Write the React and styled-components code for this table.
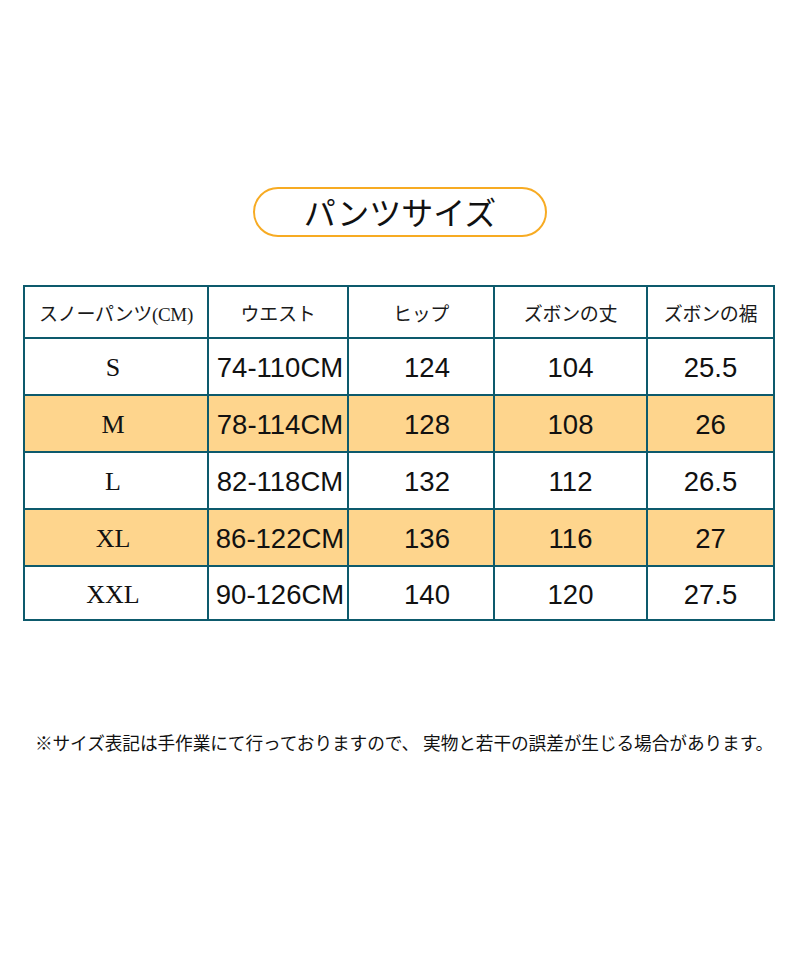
import React from "react";
import styled, { createGlobalStyle } from "styled-components";

const Global = createGlobalStyle`
  html, body { margin: 0; padding: 0; background: #fff; }
  body { width: 800px; height: 960px; overflow: hidden; }
`;

const Page = styled.div`
  width: 800px;
  height: 960px;
  display: flex;
  flex-direction: column;
  align-items: center;
  padding-top: 187px;
  box-sizing: border-box;
`;

const Pill = styled.div`
  width: 294px;
  height: 50px;
  box-sizing: border-box;
  border: 2.5px solid #f7ab23;
  border-radius: 25px;
  display: flex;
  align-items: center;
  justify-content: center;
  font-family: "Noto Sans CJK JP", sans-serif;
  font-size: 32px;
  font-weight: 400;
  color: #111;
  padding-bottom: 2px;
`;

const Table = styled.table`
  margin-top: 48px;
  margin-left: -2px;
  border-collapse: collapse;
  width: 750px;
  table-layout: fixed;
  border: 2px solid #0d5a6c;
`;

const Col = styled.col`
  width: ${(p) => p.$w}px;
`;

const Row = styled.tr`
  height: ${(p) => p.$h}px;
  background: ${(p) => (p.$hl ? "#fed58d" : "#fff")};
`;

const HeadCell = styled.td`
  border: 2px solid #0d5a6c;
  text-align: center;
  vertical-align: middle;
  padding: 0;
  font-family: "Liberation Serif", "Noto Sans CJK JP", serif;
  font-size: 19px;
  color: #1a1a1a;
  white-space: nowrap;
  letter-spacing: -0.3px;
`;

const SizeCell = styled.td`
  border: 2px solid #0d5a6c;
  text-align: center;
  vertical-align: middle;
  padding: 3px 6px 0 0;
  font-family: "Liberation Serif", serif;
  font-size: 26px;
  color: #111;
`;

const NumCell = styled.td`
  border: 2px solid #0d5a6c;
  text-align: center;
  vertical-align: middle;
  padding: 3px 0 0 ${(p) => p.$shift || 0}px;
  font-family: "Liberation Sans", Arial, sans-serif;
  font-size: 27.5px;
  color: #111;
  white-space: nowrap;
`;

const Note = styled.div`
  margin-top: 108px;
  margin-left: 8px;
  font-family: "Noto Sans CJK JP", sans-serif;
  font-size: 17.7px;
  color: #111;
  white-space: nowrap;
  letter-spacing: -0.1px;
`;

const cols = [184, 140, 146, 153, 127];
const heads = ["スノーパンツ(CM)", "ウエスト", "ヒップ", "ズボンの丈", "ズボンの裾"];
const rows = [
  ["S", "74-110CM", "124", "104", "25.5", false, 57],
  ["M", "78-114CM", "128", "108", "26", true, 57],
  ["L", "82-118CM", "132", "112", "26.5", false, 57],
  ["XL", "86-122CM", "136", "116", "27", true, 57],
  ["XXL", "90-126CM", "140", "120", "27.5", false, 54],
];

export default function App() {
  return (
    <>
      <Global />
      <Page>
        <Pill>パンツサイズ</Pill>
        <Table>
          <colgroup>
            {cols.map((w, i) => (
              <Col key={i} $w={w} />
            ))}
          </colgroup>
          <tbody>
            <Row $h={52}>
              {heads.map((h) => (
                <HeadCell key={h}>{h}</HeadCell>
              ))}
            </Row>
            {rows.map(([s, w, h, l, hem, hl, ht]) => (
              <Row key={s} $hl={hl} $h={ht}>
                <SizeCell>{s}</SizeCell>
                <NumCell $shift={4}>{w}</NumCell>
                <NumCell $shift={12}>{h}</NumCell>
                <NumCell>{l}</NumCell>
                <NumCell>{hem}</NumCell>
              </Row>
            ))}
          </tbody>
        </Table>
        <Note>※サイズ表記は手作業にて行っておりますので、 実物と若干の誤差が生じる場合があります。</Note>
      </Page>
    </>
  );
}
